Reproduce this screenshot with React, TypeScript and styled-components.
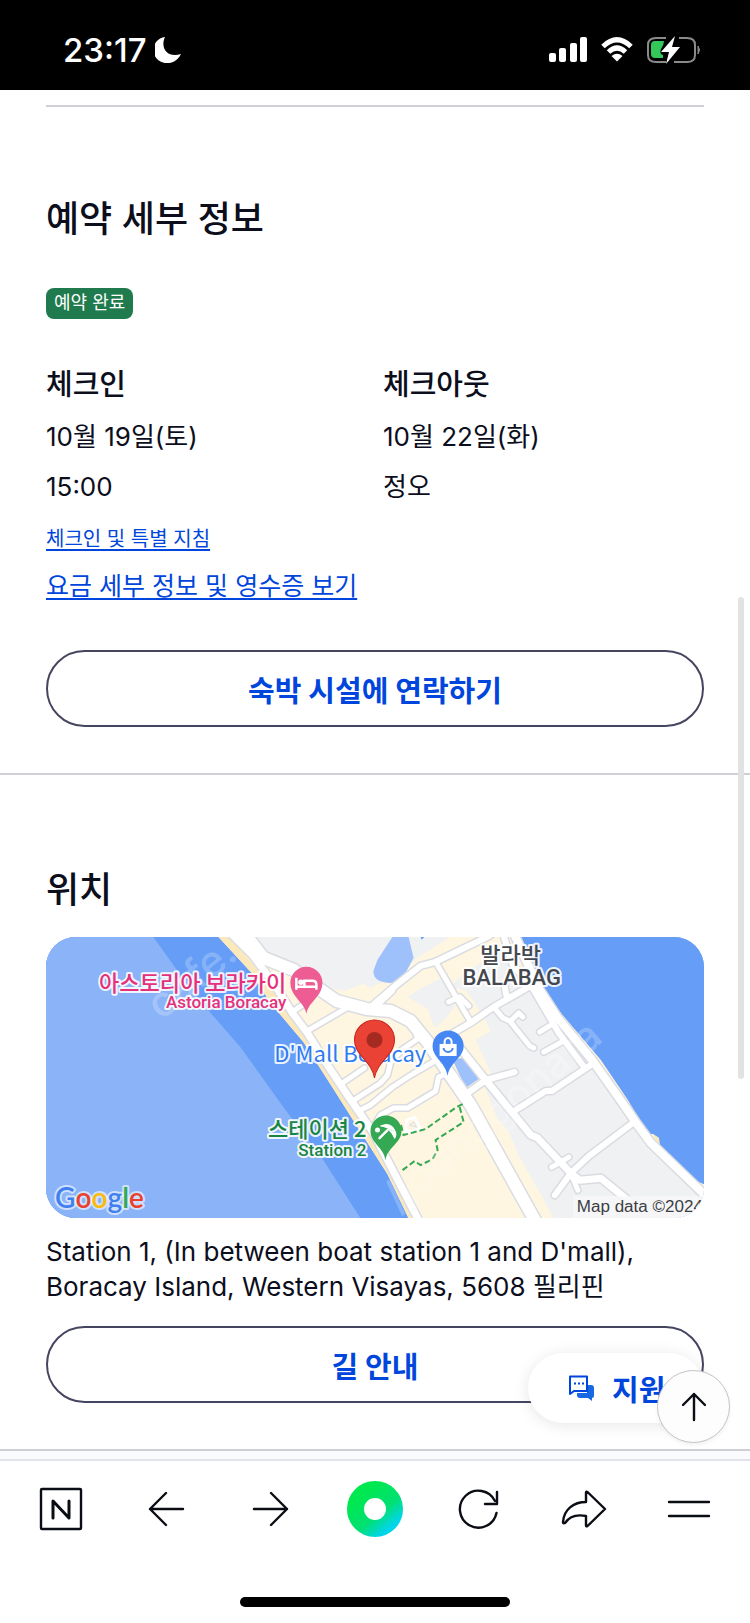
import React from "react";
import styled, { createGlobalStyle } from "styled-components";

const ink = "#0c0e1c";
const link = "#0046dc";

const GlobalStyle = createGlobalStyle`
  *, *::before, *::after { box-sizing: border-box; }
  body {
    margin: 0;
    background: #fff;
    color: ${ink};
    font-family: Inter, "Noto Sans CJK KR", sans-serif;
  }
  h1, h2, h3, p, dl, dd, dt { margin: 0; }
  button { font-family: inherit; cursor: pointer; padding: 0; }
`;

const Page = styled.div`
  position: relative;
  display: flex;
  flex-direction: column;
  min-height: 100vh;
  overflow: hidden;
`;

const StatusBar = styled.header`
  display: flex;
  align-items: center;
  justify-content: space-between;
  height: 90px;
  padding: 10px 50px 0 63px;
  background: #000;
  color: #fff;
`;

const StatusGroup = styled.div<{ $gap: number }>`
  display: flex;
  align-items: center;
  gap: ${(p) => p.$gap}px;
`;

const Clock = styled.time`
  font-size: 33px;
  line-height: 40px;
  font-weight: 500;
`;

const Section = styled.section<{ $top: number }>`
  padding: ${(p) => p.$top}px 46px 46px;
  border-bottom: 2px solid #cfcfd6;
`;

const TopRule = styled.hr`
  margin: 0 0 90px;
  border: 0;
  border-top: 2px solid #cfcfd8;
`;

const Title = styled.h2`
  font-size: 36px;
  line-height: 44px;
  font-weight: 500;
`;

const Badge = styled.span`
  display: block;
  width: fit-content;
  margin-top: 47px;
  padding: 0 8px 1px;
  border-radius: 8px;
  background: #1f7a4d;
  color: #fff;
  font-size: 18px;
  line-height: 30px;
`;

const Dates = styled.dl`
  display: grid;
  grid-template-columns: 1fr 1fr;
  column-gap: 16px;
  margin-top: 48px;
`;

const DateTerm = styled.dt`
  font-size: 29px;
  line-height: 36px;
  font-weight: 500;
  margin-bottom: 9px;
`;

const DateValue = styled.dd`
  font-size: 26px;
  line-height: 50px;
`;

const Links = styled.div`
  display: flex;
  flex-direction: column;
  align-items: flex-start;
  gap: 11px;
  margin: 11px 0 44px;
`;

const TextLink = styled.a<{ $small?: boolean }>`
  font-size: ${(p) => (p.$small ? 20 : 25)}px;
  line-height: ${(p) => (p.$small ? 32 : 40)}px;
  color: ${link};
  text-decoration: underline;
  text-decoration-thickness: 2px;
  text-underline-offset: 3px;
`;

const OutlineButton = styled.button`
  display: block;
  width: 100%;
  height: 77px;
  border: 2px solid #45455f;
  border-radius: 39px;
  background: #fff;
  color: ${link};
  font-size: 29px;
  font-weight: 700;
`;

const MapFrame = styled.figure`
  margin: 25px 0 16px;
  height: 281px;
  border-radius: 30px;
  overflow: hidden;
  background: #659df7;

  svg { display: block; width: 100%; height: 100%; }
`;

const Address = styled.p`
  margin-bottom: 22px;
  font-size: 26px;
  line-height: 35px;
`;

const Band = styled.div`
  height: 10px;
  background: #fafbfc;
  border-bottom: 2px solid #e2e3ea;
`;

const Toolbar = styled.nav`
  display: flex;
  justify-content: space-between;
  align-items: center;
  padding: 19px 39px 0;
`;

const ToolButton = styled.button`
  display: grid;
  place-content: center;
  width: 44px;
  height: 58px;
  border: 0;
  background: none;

  svg { overflow: visible; }
`;

const HomeArea = styled.div`
  display: flex;
  justify-content: center;
  padding: 59px 0 16px;
`;

const HomeIndicator = styled.div`
  width: 36%;
  height: 10px;
  border-radius: 5px;
  background: #000;
`;

const SupportButton = styled.button`
  position: absolute;
  right: 46px;
  bottom: 200px;
  display: flex;
  align-items: center;
  gap: 18px;
  width: 176px;
  height: 70px;
  padding-left: 40px;
  border: 0;
  border-radius: 35px;
  background: #fff;
  box-shadow: 0 2px 16px rgba(0, 0, 0, 0.1);
  color: ${link};
  font-size: 29px;
  font-weight: 700;
`;

const TopButton = styled.button`
  position: absolute;
  right: 20px;
  bottom: 180px;
  display: grid;
  place-items: center;
  width: 73px;
  height: 73px;
  border: 1px solid #c4c4c6;
  border-radius: 50%;
  background: #fdfdfd;
  box-shadow: 0 2px 4px rgba(0, 0, 0, 0.06);
`;

const ScrollThumb = styled.div`
  position: absolute;
  top: 597px;
  right: 6px;
  width: 6px;
  height: 482px;
  border-radius: 3px;
  background: #e2e2e3;
`;

const roads: [number, string][] = [
  [5, "M247 74 258 67M261 94 302 70M327 72 346 54M296 146 318 131"],
  [5, "M306 164 334 146 341 138 344 126 355 113 371 102 369 95"],
  [5, "M312 174 324 168 346 150 366 137 390 123"],
  [5, "M328 188 334 178 347 171 361 171 389 154 392 140 402 136"],
  [6, "M322 72 350 48 374 29 389 25 441 0 450 -6"],
  [5, "M389 25 407 56 424 85M402 65 413 60 422 69"],
  [6, "M405 97 424 86 447 70 482 50M458 50 460 60"],
  [5, "M447 70 456 81 463 84 483 109 487 111M464 84 472 76 476 80"],
  [5, "M493 95 506 87M497 115 515 105"],
  [6, "M456 -4 466 28 487 53 512 96 538 131"],
  [7, "M411 108 439 143 484 198 491 201 524 236 533 243 554 241 582 264"],
  [6, "M421 156 439 143 468 135"],
  [6, "M469 173 499 154 505 154 547 126"],
  [6, "M508 258 524 236 542 219 587 185"],
  [5, "M505 230 522 220M524 236 531 253"],
  [7, "M184 -4 206 18 227 46 246 76 261 96 281 128 301 158 327 196 341 223 371 281"],
  [8, "M466 -6 491 50 511 81 546 124 577 168 590 187 604 206 660 260"],
  [12, "M196 -6 217 21 247 33 264 46 290 64 320 72 344 74 364 84 381 105 402 136 424 168 492 290"],
];

const MapPicture = () => (
  <svg viewBox="0 0 657 281" preserveAspectRatio="xMidYMid slice" role="img" aria-label="Boracay">
    <rect width="657" height="281" fill="#659df7" />
    <path d="M0 0H107L147 56 194 110 237 170 277 223 314 281H0Z" fill="#8ab3f8" />
    <path
      d="M172 0 207 38 224 66 257 105 287 152 311 190 341 237 362 281H657V247L641 240 613 210 612 201 606 197 597 197 591 180 581 163 554 123 514 76 497 54 471 0Z"
      fill="#fef6e0"
    />
    <path d="M172 0 207 38 224 66 257 105 287 152 311 190 341 237 362 281H368L332 206 291 142 262 99 229 54 184 0Z" fill="#fbe8bb" />
    <path d="M551 132 578 172 588 188 574 172ZM606 197 612 201 613 212Z" fill="#fbe8bb" />
    <g fill="#f0f1f3">
      <path d="M204 -1 218 18 250 32 277 50 298 54 317 47 324 51 352 38 371 21 404 0Z" />
      <path d="M361 60 375 51 395 41 408 70 400 80 388 91 381 72Z" />
      <path d="M404 50 418 36 430 29 452 10 471 30 484 49 447 70 433 74 420 54Z" />
      <path d="M435 76 481 50 497 54 546 124 590 187 657 262V281H507L490 250 472 219 463 197 450 180 438 150 446 140 429 103 444 94Z" />
    </g>
    <path d="M346 0H362L367 21 357 40Q350 47 341 46 326 44 327 34L331 23Z" fill="#9fc1fb" />
    <path d="M374 0 378 0 375 3Z" fill="#659df7" />
    <path d="M406 123 420 120 432 142 419 151Z" fill="#9fc1fb" />
    <g fill="none" strokeLinejoin="round" strokeLinecap="round">
      {roads.map(([w, d]) => (
        <path key={`c${d}`} d={d} stroke="#dadce2" strokeWidth={w + 3} />
      ))}
      {roads.map(([w, d]) => (
        <path key={d} d={d} stroke="#fff" strokeWidth={w} />
      ))}
      <path d="M360 183 368 180 374 192 359 195Z" stroke="#fff" strokeWidth="3" />
      <path d="M363 188 367 185 370 190Z" stroke="#dadce2" strokeWidth="1" />
    </g>
    <path
      d="M416 167 410 170 379 192 357 198 354 186M413 170 417 185 389 203 391 213 386 222 374 228 368 224 356 233"
      fill="none"
      stroke="#34a853"
      strokeWidth="2"
      strokeDasharray="6 3"
    />
    <g fill="#fff" fillOpacity="0.24" fontFamily="Inter, sans-serif" fontWeight="500" fontSize="42">
      <text transform="translate(115 84) rotate(-39)">cafe.</text>
      <text transform="translate(352 276) rotate(-40)">/joonggonara</text>
    </g>
    <rect x="526" y="259" width="131" height="22" fill="#f7f7f8" fillOpacity="0.85" />
    <text x="530" y="275" fontFamily="Liberation Sans, sans-serif" fontSize="17" fill="#3c3f43">
      Map data ©2024
    </text>
    <g
      fontFamily='"Noto Sans CJK KR", sans-serif'
      fontSize="22"
      stroke="#fff"
      strokeOpacity="0.9"
      strokeWidth="4"
      strokeLinejoin="round"
      paintOrder="stroke"
    >
      <g textAnchor="end" fill="#e5317a">
        <text x="240" y="54" fontWeight="500">아스토리아 보라카이</text>
        <text x="240" y="71" fontFamily="Roboto, sans-serif" fontSize="17" fontWeight="500">Astoria Boracay</text>
      </g>
      <text x="228" y="125" fill="#2f7cf0">D'Mall Boracay</text>
      <g textAnchor="end" fill="#188544">
        <text x="320" y="200" fontWeight="500">스테이션 2</text>
        <text x="320" y="219" fontFamily="Roboto, sans-serif" fontSize="17" fontWeight="500">Station 2</text>
      </g>
      <g textAnchor="middle" fill="#44484e" fontWeight="500">
        <text x="464" y="26">발라박</text>
        <text x="465" y="48" fontFamily="Roboto, sans-serif" fontSize="22">BALABAG</text>
      </g>
      <text x="9" y="271" fontFamily="Lato, sans-serif" fontSize="28" fontWeight="600" strokeOpacity="0.6">
        <tspan fill="#3f7ff0">G</tspan>
        <tspan fill="#e8412f">o</tspan>
        <tspan fill="#f9ba0a">o</tspan>
        <tspan fill="#3f7ff0">g</tspan>
        <tspan fill="#33a852">l</tspan>
        <tspan fill="#e8412f">e</tspan>
      </text>
    </g>
    <path d="M260 77C258 65 244 60 244 46a16 16 0 0 1 32 0C276 60 262 65 260 77Z" fill="#ed5c92" />
    <path d="M250 41v12M270 53v-5q0-4-4-4h-8v6M250 50h20M253 45.500a1.500 1.500 0 1 0 3 0a1.500 1.500 0 1 0-3 0" fill="none" stroke="#fff" strokeWidth="2.500" />
    <path d="M401 139C399 125 386 121 386 109a15 15 0 0 1 31 0C417 121 403 125 401 139Z" fill="#4687f4" />
    <path d="M393 107h17v12h-17Z" fill="#fff" />
    <path d="M398 107v-2a3.500 4 0 0 1 7 0v2" fill="none" stroke="#fff" strokeWidth="2" />
    <path d="M397 111a4.500 4 0 0 0 9 0" fill="none" stroke="#4687f4" strokeWidth="2" />
    <path d="M339 223C337 210 324 206 324 194a15.500 15.500 0 0 1 31 0C355 206 341 210 339 223Z" fill="#34a853" />
    <g transform="translate(340 195)" fill="none" stroke="#fff" strokeWidth="2.500" strokeLinecap="round">
      <path d="M-6 -6Q4 -11 9 0Q5 -3 1 -4Q-3 -6 -6 -6ZM9 0Q10 4 8 6Q6 1 2 -3" fill="#fff" strokeWidth="1" />
      <path d="M1 -2 -7 6" />
    </g>
    <circle cx="331" cy="193" r="2.500" fill="#fff" />
    <path d="M328 141C325 123 308 119 308 103a20 20 0 0 1 40 0C348 119 331 123 328 141Z" fill="#ea4335" stroke="#c5221f" strokeWidth="1" />
    <circle cx="328" cy="103" r="8" fill="#a52a22" />
  </svg>
);

const line = {
  fill: "none",
  stroke: "#0b0d14",
  strokeWidth: 2.4,
  strokeLinecap: "round",
  strokeLinejoin: "round",
} as const;

const StatusIcons = () => (
  <StatusGroup $gap={14} aria-hidden>
    <svg width="38" height="26" fill="#fff">
      <rect x="0" y="16" width="7" height="9" rx="2" />
      <rect x="10" y="11" width="7" height="14" rx="2" />
      <rect x="21" y="6" width="7" height="19" rx="2" />
      <rect x="31" y="0" width="7" height="25" rx="2" />
    </svg>
    <svg width="32" height="26" fill="none" stroke="#fff" strokeWidth="5">
      <path d="M2 9.500Q16-4 30 9.500M7.500 15Q16 7 24.500 15" />
      <path d="M16 24.500 10.500 19Q16 14.500 21.500 19Z" fill="#fff" stroke="none" />
    </svg>
    <svg width="53" height="28">
      <path d="M19 2H9Q1 2 1 9v10q0 7 8 7h10M32 2h8q8 0 8 7v10q0 7-8 7H27" fill="none" stroke="#8a8a8a" strokeWidth="2" />
      <path d="M51 10q3 4 0 8Z" fill="#8a8a8a" stroke="#8a8a8a" />
      <path d="M8 5h9q0 4-3 8-2 5 2 6v3H8Q4 22 4 18V9Q4 5 8 5Z" fill="#34c759" />
      <path d="M28 0 14 16h8l-3 12L33 11h-8Z" fill="#fff" />
    </svg>
  </StatusGroup>
);

export default function App() {
  return (
    <Page>
      <GlobalStyle />
      <StatusBar>
        <StatusGroup $gap={8}>
          <Clock>23:17</Clock>
          <svg width="26" height="26" aria-hidden>
            <path d="M10 0C5 11 12 21 26 17 22 25 16 26 13 26A13 13 0 0 1 10 0Z" fill="#fff" />
          </svg>
        </StatusGroup>
        <StatusIcons />
      </StatusBar>

      <main>
        <Section $top={15}>
          <TopRule />
          <Title>예약 세부 정보</Title>
          <Badge>예약 완료</Badge>
          <Dates>
            <div>
              <DateTerm>체크인</DateTerm>
              <DateValue>10월 19일(토)</DateValue>
              <DateValue>15:00</DateValue>
            </div>
            <div>
              <DateTerm>체크아웃</DateTerm>
              <DateValue>10월 22일(화)</DateValue>
              <DateValue>정오</DateValue>
            </div>
          </Dates>
          <Links>
            <TextLink href="#instructions" $small>체크인 및 특별 지침</TextLink>
            <TextLink href="#receipt">요금 세부 정보 및 영수증 보기</TextLink>
          </Links>
          <OutlineButton type="button">숙박 시설에 연락하기</OutlineButton>
        </Section>

        <Section $top={93}>
          <Title>위치</Title>
          <MapFrame>
            <MapPicture />
          </MapFrame>
          <Address>
            Station 1, (In between boat station 1 and D'mall), Boracay Island, Western Visayas, 5608 필리핀
          </Address>
          <OutlineButton type="button">길 안내</OutlineButton>
        </Section>
      </main>

      <Band />
      <Toolbar>
        <ToolButton type="button" aria-label="Naver">
          <svg width="42" height="42" {...line}>
            <rect x="1" y="1" width="40" height="40" rx="1" />
            <path d="M13 30V13L29 30V13" strokeWidth="3" />
          </svg>
        </ToolButton>
        <ToolButton type="button" aria-label="Back">
          <svg width="36" height="36" {...line}>
            <path d="M35 18H2M18 2 2 18 18 34" />
          </svg>
        </ToolButton>
        <ToolButton type="button" aria-label="Forward">
          <svg width="36" height="36" {...line}>
            <path d="M2 18H35M19 2 35 18 19 34" />
          </svg>
        </ToolButton>
        <ToolButton type="button" aria-label="Home">
          <svg width="56" height="56">
            <defs>
              <linearGradient id="ring" x1="0.200" y1="0.100" x2="0.900" y2="0.950">
                <stop offset="0" stopColor="#00e850" />
                <stop offset="0.600" stopColor="#00e072" />
                <stop offset="1" stopColor="#00d5ea" />
              </linearGradient>
            </defs>
            <circle cx="28" cy="28" r="19.500" fill="none" stroke="url(#ring)" strokeWidth="17" />
          </svg>
        </ToolButton>
        <ToolButton type="button" aria-label="Reload">
          <svg width="42" height="40" {...line}>
            <path d="M37.500 24A18.500 18.500 0 1 1 36 12M38 3V15H26" />
          </svg>
        </ToolButton>
        <ToolButton type="button" aria-label="Share">
          <svg width="44" height="38" {...line}>
            <path d="M24 2.500Q24 1 25.500 2L43 19 25.500 36Q24 37 24 35.500V26C14 24 7 27 3 33Q1 34 1 32C2 19 12 12 24 12Z" />
          </svg>
        </ToolButton>
        <ToolButton type="button" aria-label="Menu">
          <svg width="42" height="18" {...line}>
            <path d="M1 2H41M1 16H41" />
          </svg>
        </ToolButton>
      </Toolbar>
      <HomeArea>
        <HomeIndicator />
      </HomeArea>

      <ScrollThumb />
      <SupportButton type="button">
        <svg width="26" height="26" aria-hidden>
          <path d="M19 10h4q3 0 3 3v8q0 2-2 2v3l-4-3h-8q-3 0-3-3v-2h10Z" fill="#1668e3" />
          <path d="M2 1.500H19V16H6L2 19V1.500Z" fill="#fff" stroke={link} strokeWidth="2" strokeLinejoin="round" />
          <path d="M6 8.500h2M10 8.500h2M14 8.500h2" stroke={link} strokeWidth="2" />
        </svg>
        지원
      </SupportButton>
      <TopButton type="button" aria-label="맨 위로">
        <svg width="24" height="30" {...line}>
          <path d="M12 28V2M1 13 12 2 23 13" />
        </svg>
      </TopButton>
    </Page>
  );
}
